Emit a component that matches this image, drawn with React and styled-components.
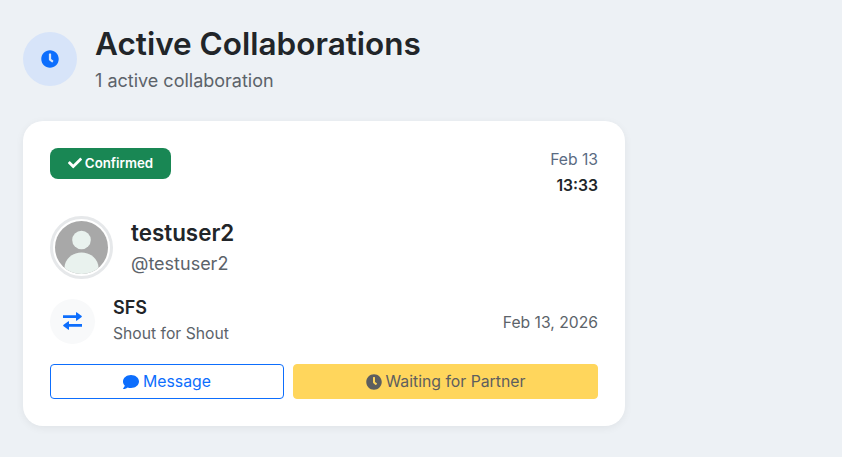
import React from "react";
import styled, { createGlobalStyle } from "styled-components";
import { FaClock, FaCheck, FaComment } from "react-icons/fa";

const Global = createGlobalStyle`
  html, body { margin: 0; padding: 0; background: #edf1f5; }
  body { font-family: Inter, "Liberation Sans", sans-serif; color: #212529; }
  * { box-sizing: border-box; }
`;
const Page = styled.div`
  width: 842px; height: 457px; overflow: hidden;
  padding: 24px 217px 0 23px;
`;
const Header = styled.header`
  display: flex; align-items: flex-start; gap: 18px; margin-bottom: 24px; height: 73px;
`;
const HeaderIcon = styled.div`
  width: 54px; height: 54px; margin-top: 8px; border-radius: 50%;
  background: #d7e4f9; color: #0d6efd; font-size: 18px;
  display: flex; align-items: center; justify-content: center;
`;
const Title = styled.h1`
  margin: 0; font-size: 31.5px; line-height: 40px; font-weight: 600; color: #212529;
`;
const Subtitle = styled.p`
  margin: 6px 0 0; font-size: 18px; line-height: 22px; color: #5c636a;
`;
const Card = styled.section`
  height: 305px; background: #fff; border-radius: 20px; padding: 27px;
  box-shadow: 0 2px 8px rgba(0,0,0,.06);
`;
const TopRow = styled.div`
  display: flex; justify-content: space-between; align-items: flex-start; height: 68px;
`;
const Badge = styled.span`
  display: inline-flex; align-items: center; justify-content: center; gap: 3px;
  width: 121px; height: 31px; border-radius: 8px; background: #198754; color: #fff;
  font-size: 13.3px; font-weight: 600; padding-bottom: 1px;
`;
const DateCol = styled.div`
  text-align: right; font-size: 15.7px; line-height: 18px; margin-top: 3px;
`;
const DateText = styled.div` color: #5a6b82; `;
const Time = styled.div` font-weight: 600; color: #212529; margin-top: 8px; `;
const UserRow = styled.div`
  display: flex; align-items: flex-start; gap: 18px; height: 82px;
`;
const Avatar = styled.svg`
  width: 63px; height: 63px; flex: none; display: block;
`;
const UserName = styled.div`
  font-size: 22.4px; line-height: 28px; font-weight: 600; color: #212529; margin-top: 3px;
`;
const Handle = styled.div`
  font-size: 18px; line-height: 22px; color: #5c636a; margin-top: 6px;
`;
const TypeRow = styled.div`
  display: flex; align-items: center; gap: 18px; height: 46px;
`;
const TypeIcon = styled.div`
  width: 45px; height: 45px; border-radius: 50%; background: #f8f9fa; color: #0d6efd;
  display: flex; align-items: center; justify-content: center; flex: none;
`;
const SwapGlyph = styled.svg`
  width: 19px; height: 18px; display: block;
`;
const TypeText = styled.div` flex: 1; margin-top: -3px; `;
const TypeName = styled.div`
  font-size: 18px; line-height: 22px; font-weight: 600; color: #212529;
`;
const TypeDesc = styled.div`
  font-size: 15.7px; line-height: 18px; color: #5c636a; margin-top: 6px;
`;
const TypeDate = styled.div`
  font-size: 15.7px; color: #5c636a; margin-top: 2px;
`;
const Actions = styled.div`
  display: grid; grid-template-columns: 234px 305px; gap: 9px; margin-top: 20px;
`;
const Button = styled.button`
  height: 35px; border-radius: 4px; font-family: inherit; font-size: 15.8px; padding: 0;
  display: flex; align-items: center; justify-content: center; gap: 4px;
  border: 1px solid ${p => p.$variant === "outline" ? "#0d6efd" : "#ffd65c"};
  background: ${p => p.$variant === "outline" ? "#fff" : "#ffd65c"};
  color: ${p => p.$variant === "outline" ? "#0d6efd" : "#5d5e5f"};
`;

export default function App() {
  return (
    <Page>
      <Global />
      <Header>
        <HeaderIcon><FaClock /></HeaderIcon>
        <div>
          <Title>Active Collaborations</Title>
          <Subtitle>1 active collaboration</Subtitle>
        </div>
      </Header>
      <Card>
        <TopRow>
          <Badge><FaCheck size={14} />Confirmed</Badge>
          <DateCol>
            <DateText>Feb 13</DateText>
            <Time>13:33</Time>
          </DateCol>
        </TopRow>
        <UserRow>
          <Avatar viewBox="0 0 63 63" aria-hidden="true">
            <defs>
              <clipPath id="avatar-clip"><circle cx="31.5" cy="31.5" r="26.5" /></clipPath>
            </defs>
            <circle cx="31.5" cy="31.5" r="30" fill="#fff" stroke="#e6e8ea" strokeWidth="3" />
            <circle cx="31.5" cy="31.5" r="26.5" fill="#a8a8a8" />
            <g clipPath="url(#avatar-clip)">
              <circle cx="31.5" cy="24" r="9.3" fill="#e9f2ee" />
              <ellipse cx="31.5" cy="52" rx="17" ry="15.5" fill="#e9f2ee" />
            </g>
          </Avatar>
          <div>
            <UserName>testuser2</UserName>
            <Handle>@testuser2</Handle>
          </div>
        </UserRow>
        <TypeRow>
          <TypeIcon>
            <SwapGlyph viewBox="0 0 19 18" aria-hidden="true" fill="currentColor">
              <path d="M0 3.3H13V0.6Q13 0 13.6 0.3L18.7 4.1Q19 4.5 18.7 4.9L13.6 8.7Q13 9 13 8.4V5.9H0Z" />
              <path d="M19 12.1H6V9.6Q6 9 5.4 9.3L0.3 13.1Q0 13.5 0.3 13.9L5.4 17.7Q6 18 6 17.4V14.7H19Z" />
            </SwapGlyph>
          </TypeIcon>
          <TypeText>
            <TypeName>SFS</TypeName>
            <TypeDesc>Shout for Shout</TypeDesc>
          </TypeText>
          <TypeDate>Feb 13, 2026</TypeDate>
        </TypeRow>
        <Actions>
          <Button $variant="outline"><FaComment size={16} />Message</Button>
          <Button $variant="waiting"><FaClock size={16} />Waiting for Partner</Button>
        </Actions>
      </Card>
    </Page>
  );
}
